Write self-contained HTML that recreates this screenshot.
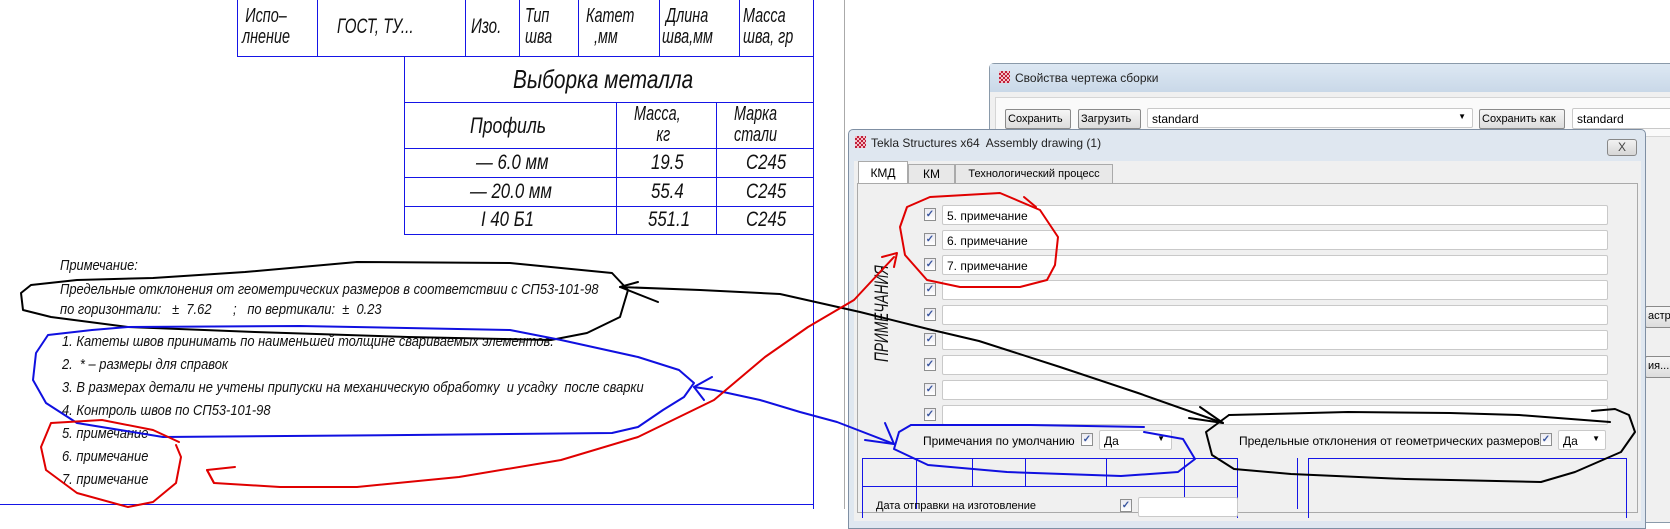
<!DOCTYPE html>
<html><head><meta charset="utf-8"><style>
*{margin:0;padding:0;box-sizing:border-box}
body{width:1670px;height:509px;background:#fff;position:relative;overflow:hidden;font-family:"Liberation Sans",sans-serif}
.a{position:absolute}
.g{font-family:"Liberation Sans",sans-serif;font-style:italic;color:#111;white-space:nowrap;transform-origin:0 0;transform:scaleX(0.72)}
.g8{transform:scaleX(0.8)}
.n{transform:scaleX(0.86)}
.bl{position:absolute;background:#1515e6}
.ui{font-family:"Liberation Sans",sans-serif;font-size:11px;color:#000;white-space:nowrap}
.btn{position:absolute;border:1px solid #8a8a8a;border-radius:2px;background:linear-gradient(#f6f6f6,#dcdcdc);font-size:11px;padding:3px 2px}
.fld{position:absolute;background:#fff;border:1px solid #c9c9c9;border-radius:2px;font-size:12px;padding:3px 4px}
.cb{position:absolute;width:12px;height:13px;border:1px solid #8e8f8f;background:linear-gradient(#eaeaf0,#fff);font-size:10px;color:#3a56a0;text-align:center;line-height:11px;font-weight:bold}
</style></head><body>

<div class="bl" style="left:237px;top:0;width:1px;height:57px"></div>
<div class="bl" style="left:317px;top:0;width:1px;height:57px"></div>
<div class="bl" style="left:465px;top:0;width:1px;height:57px"></div>
<div class="bl" style="left:519px;top:0;width:1px;height:57px"></div>
<div class="bl" style="left:578px;top:0;width:1px;height:57px"></div>
<div class="bl" style="left:659px;top:0;width:1px;height:57px"></div>
<div class="bl" style="left:739px;top:0;width:1px;height:57px"></div>
<div class="bl" style="left:237px;top:56px;width:577px;height:1px"></div>
<div class="bl" style="left:404px;top:56px;width:1px;height:179px"></div>
<div class="bl" style="left:404px;top:102px;width:410px;height:1px"></div>
<div class="bl" style="left:404px;top:148px;width:410px;height:1px"></div>
<div class="bl" style="left:404px;top:177px;width:410px;height:1px"></div>
<div class="bl" style="left:404px;top:206px;width:410px;height:1px"></div>
<div class="bl" style="left:404px;top:234px;width:410px;height:1px"></div>
<div class="bl" style="left:616px;top:102px;width:1px;height:132px"></div>
<div class="bl" style="left:716px;top:102px;width:1px;height:132px"></div>
<div class="bl" style="left:813px;top:0;width:1px;height:509px"></div>
<div class="bl" style="left:0;top:504px;width:813px;height:1px"></div>
<div class="a" style="left:844px;top:0;width:1px;height:509px;background:#aaa"></div>

<div class="g a" style="left:242px;top:6px;font-size:20px;line-height:21px;text-align:center">Испо–<br>лнение</div>
<div class="g a" style="left:337px;top:15px;font-size:21px">ГОСТ, ТУ...</div>
<div class="g a" style="left:471px;top:15px;font-size:21px">Изо.</div>
<div class="g a" style="left:525px;top:6px;font-size:20px;line-height:21px">Тип<br>шва</div>
<div class="g a" style="left:586px;top:6px;font-size:20px;line-height:21px">Катет<br>&nbsp;&nbsp;,мм</div>
<div class="g a" style="left:662px;top:6px;font-size:20px;line-height:21px">&nbsp;Длина<br>шва,мм</div>
<div class="g a" style="left:743px;top:6px;font-size:20px;line-height:21px">Масса<br>шва, гр</div>
<div class="g a g8" style="left:513px;top:64px;font-size:26px">Выборка металла</div>
<div class="g a g8" style="left:470px;top:113px;font-size:22px">Профиль</div>
<div class="g a" style="left:634px;top:104px;font-size:20px;line-height:21px;text-align:center">Масса,<br>&nbsp;&nbsp;&nbsp;кг</div>
<div class="g a" style="left:734px;top:104px;font-size:20px;line-height:21px">Марка<br>стали</div>
<div class="g a g8" style="left:476px;top:151px;font-size:21px">— 6.0 мм</div>
<div class="g a g8" style="left:470px;top:180px;font-size:21px">— 20.0 мм</div>
<div class="g a g8" style="left:481px;top:208px;font-size:21px">I 40 Б1</div>
<div class="g a g8" style="left:651px;top:151px;font-size:21px">19.5</div>
<div class="g a g8" style="left:651px;top:180px;font-size:21px">55.4</div>
<div class="g a g8" style="left:648px;top:208px;font-size:21px">551.1</div>
<div class="g a g8" style="left:746px;top:151px;font-size:21px">С245</div>
<div class="g a g8" style="left:746px;top:180px;font-size:21px">С245</div>
<div class="g a g8" style="left:746px;top:208px;font-size:21px">С245</div>

<div class="g a n" style="left:60px;top:257px;font-size:15px">Примечание:</div>
<div class="g a n" style="left:60px;top:281px;font-size:15px">Предельные отклонения от геометрических размеров в соответствии с СП53-101-98</div>
<div class="g a n" style="left:60px;top:301px;font-size:15px">по горизонтали:&nbsp;&nbsp; ±&nbsp; 7.62&nbsp;&nbsp;&nbsp;&nbsp;&nbsp; ;&nbsp;&nbsp; по вертикали:&nbsp; ±&nbsp; 0.23</div>
<div class="g a n" style="left:62px;top:333px;font-size:15px">1. Катеты швов принимать по наименьшей толщине свариваемых элементов.</div>
<div class="g a n" style="left:62px;top:356px;font-size:15px">2.&nbsp; * – размеры для справок</div>
<div class="g a n" style="left:62px;top:379px;font-size:15px">3. В размерах детали не учтены припуски на механическую обработку&nbsp; и усадку&nbsp; после сварки</div>
<div class="g a n" style="left:62px;top:402px;font-size:15px">4. Контроль швов по СП53-101-98</div>
<div class="g a n" style="left:62px;top:425px;font-size:15px">5. примечание</div>
<div class="g a n" style="left:62px;top:448px;font-size:15px">6. примечание</div>
<div class="g a n" style="left:62px;top:471px;font-size:15px">7. примечание</div>

<div class="a" style="left:989px;top:63px;width:700px;height:460px;background:#f0f0f0;border:1px solid #8a9aaa;border-radius:5px 0 0 0"></div>
<div class="a" style="left:990px;top:64px;width:700px;height:28px;background:linear-gradient(#dde8f3,#c9d8e8)"></div>
<div class="a" style="left:999px;top:71px;width:11px;height:12px;background:repeating-conic-gradient(#c0203a 0 25%,#f3c0c8 0 50%) 0 0/4px 4px"></div>
<div class="a ui" style="left:1015px;top:71px;font-size:12px;color:#222">Свойства чертежа сборки</div>
<div class="a" style="left:995px;top:97px;width:680px;height:40px;border:1px solid #d5d5d5;background:#fafafa"></div>
<div class="btn" style="left:1005px;top:109px;width:66px;height:20px">Сохранить</div>
<div class="btn" style="left:1078px;top:109px;width:63px;height:20px">Загрузить</div>
<div class="fld" style="left:1147px;top:108px;width:326px;height:20px">standard<span style="position:absolute;right:6px;font-size:8px">▼</span></div>
<div class="btn" style="left:1479px;top:109px;width:86px;height:20px">Сохранить как</div>
<div class="fld" style="left:1572px;top:108px;width:110px;height:21px">standard</div>
<div class="btn" style="left:1645px;top:306px;width:40px;height:22px">астр</div>
<div class="btn" style="left:1645px;top:356px;width:40px;height:22px">ия...</div>

<div class="a" style="left:848px;top:129px;width:798px;height:400px;background:#dfe7f0;border:1px solid #7f8fa3;border-radius:5px 5px 0 0"></div>
<div class="a" style="left:855px;top:136px;width:11px;height:12px;background:repeating-conic-gradient(#c0203a 0 25%,#f3c0c8 0 50%) 0 0/4px 4px"></div>
<div class="a ui" style="left:871px;top:136px;font-size:12px;color:#222">Tekla Structures x64&nbsp; Assembly drawing (1)</div>
<div class="a" style="left:1607px;top:139px;width:30px;height:17px;border:1px solid #888;border-radius:3px;background:linear-gradient(#f2f2f2,#d6d6d6);text-align:center;font-size:12px;line-height:15px;color:#444">X</div>
<div class="a" style="left:854px;top:161px;width:787px;height:360px;background:#f0f0f0"></div>
<div class="a ui" style="left:858px;top:161px;width:50px;height:23px;background:#fff;border:1px solid #aaa;border-bottom:none;text-align:center;line-height:22px;font-size:12px">КМД</div>
<div class="a ui" style="left:908px;top:164px;width:47px;height:20px;background:#e8e8e8;border:1px solid #aaa;text-align:center;line-height:19px;font-size:12px">КМ</div>
<div class="a ui" style="left:955px;top:164px;width:158px;height:20px;background:#e8e8e8;border:1px solid #aaa;text-align:center;line-height:19px">Технологический процесс</div>
<div class="a" style="left:857px;top:183px;width:781px;height:330px;border:1px solid #aaa;background:#f0f0f0"></div>

<div class="cb" style="left:924px;top:208px">✓</div><div class="fld ui" style="left:942px;top:205px;width:666px;height:20px;font-size:12px">5. примечание</div>
<div class="cb" style="left:924px;top:233px">✓</div><div class="fld ui" style="left:942px;top:230px;width:666px;height:20px;font-size:12px">6. примечание</div>
<div class="cb" style="left:924px;top:258px">✓</div><div class="fld ui" style="left:942px;top:255px;width:666px;height:20px;font-size:12px">7. примечание</div>
<div class="cb" style="left:924px;top:283px">✓</div><div class="fld" style="left:942px;top:280px;width:666px;height:20px"></div>
<div class="cb" style="left:924px;top:308px">✓</div><div class="fld" style="left:942px;top:305px;width:666px;height:20px"></div>
<div class="cb" style="left:924px;top:333px">✓</div><div class="fld" style="left:942px;top:330px;width:666px;height:20px"></div>
<div class="cb" style="left:924px;top:358px">✓</div><div class="fld" style="left:942px;top:355px;width:666px;height:20px"></div>
<div class="cb" style="left:924px;top:383px">✓</div><div class="fld" style="left:942px;top:380px;width:666px;height:20px"></div>
<div class="cb" style="left:924px;top:408px">✓</div><div class="fld" style="left:942px;top:405px;width:666px;height:20px"></div>
<div class="g a" style="left:872px;top:362px;font-size:19px;transform:rotate(-90deg) scaleX(0.72)">ПРИМЕЧАНИЯ</div>

<div class="a ui" style="left:923px;top:434px;font-size:12px">Примечания по умолчанию</div>
<div class="cb" style="left:1081px;top:433px">✓</div>
<div class="fld ui" style="left:1099px;top:430px;width:73px;height:20px">Да<span style="position:absolute;right:6px;font-size:8px">▼</span></div>
<div class="a ui" style="left:1239px;top:434px;font-size:12px">Предельные отклонения от геометрических размеров</div>
<div class="cb" style="left:1540px;top:433px">✓</div>
<div class="fld ui" style="left:1558px;top:430px;width:48px;height:20px">Да<span style="position:absolute;right:5px;font-size:8px">▼</span></div>

<div class="a" style="left:862px;top:458px;width:376px;height:60px;border:1px solid #1515e6;border-bottom:none"></div>
<div class="bl" style="left:862px;top:486px;width:376px;height:1px"></div>
<div class="bl" style="left:916px;top:458px;width:1px;height:51px"></div>
<div class="bl" style="left:972px;top:458px;width:1px;height:28px"></div>
<div class="bl" style="left:1025px;top:458px;width:1px;height:28px"></div>
<div class="bl" style="left:1106px;top:458px;width:1px;height:28px"></div>
<div class="bl" style="left:1184px;top:458px;width:1px;height:51px"></div>
<div class="a" style="left:1308px;top:458px;width:319px;height:60px;border:1px solid #1515e6;border-bottom:none"></div>
<div class="bl" style="left:1297px;top:458px;width:1px;height:51px"></div>
<div class="a ui" style="left:876px;top:500px">Дата отправки на изготовление</div>
<div class="cb" style="left:1120px;top:499px">✓</div>
<div class="fld" style="left:1138px;top:497px;width:100px;height:20px"></div>

<svg class="a" style="left:0;top:0" width="1670" height="509" fill="none" stroke-width="2" stroke-linecap="round" stroke-linejoin="round">
<polyline stroke="#000" points="31,285 77,280 153,278 245,272 357,262 510,263 561,268 612,273 628,290 620,317 587,333 551,340 408,337 255,332 128,327 51,317 23,310 21,293 31,285"/>
<polyline stroke="#000" points="658,302 620,287 638,282"/>
<polyline stroke="#000" points="620,287 700,290 780,294 860,312 928,329 979,341 1060,367 1138,393 1223,423"/>
<polyline stroke="#000" points="1200,407 1223,423 1189,418"/>
<polyline stroke="#000" points="1229,415 1348,412 1450,413 1519,415 1610,422"/>
<polyline stroke="#000" points="1592,411 1615,409 1629,415 1635,432 1621,452 1575,472 1541,482 1405,479 1291,474 1234,469 1212,455 1206,432 1229,415"/>
<polyline stroke="#1010e0" points="48,335 92,330 128,327 300,326 510,330 561,340 638,357 679,370 694,383 684,397 663,410 638,427 612,433 408,435 163,437 77,423 46,403 33,380 36,353 48,335"/>
<polyline stroke="#1010e0" points="712,377 694,387 704,400"/>
<polyline stroke="#1010e0" points="694,387 714,390 760,400 800,412 837,422 894,444"/>
<polyline stroke="#1010e0" points="885,423 894,444 865,440"/>
<polyline stroke="#1010e0" points="911,425 1030,425 1144,427"/>
<polyline stroke="#1010e0" points="1144,432 1183,439 1195,459 1178,472 1121,476 1007,472 928,465 894,449 899,432 911,425"/>
<polyline stroke="#e00000" points="179,442 153,430 102,420 51,423 41,447 46,470 77,493 128,507 153,502 176,483 181,457 176,445"/>
<polyline stroke="#e00000" points="235,467 207,470 214,483"/>
<polyline stroke="#e00000" points="207,470 214,483 280,487 357,487 459,477 561,460 638,437 714,400 765,357 808,327 854,300 894,257"/>
<polyline stroke="#e00000" points="882,257 897,253 894,267"/>
<polyline stroke="#e00000" points="930,197 1000,193 1040,210 1058,237 1055,265 1047,280 1020,287 960,287 927,280 905,255 900,227 907,207 930,197"/>
<polyline stroke="#e00000" points="1024,197 1036,207"/>
</svg>
</body></html>
